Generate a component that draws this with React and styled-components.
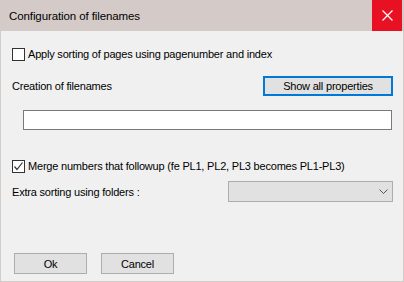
import React from 'react';
import styled, { createGlobalStyle } from 'styled-components';

const GlobalStyle = createGlobalStyle`
  html, body { margin: 0; padding: 0; background: #ffffff; }
  body {
    font-family: "Liberation Sans", Arial, sans-serif;
    font-size: 11px;
    letter-spacing: -0.2px;
    color: #000;
  }
`;

const Window = styled.div`
  width: 404px;
  height: 282px;
  box-sizing: border-box;
  background: #d4cac8;
  display: flex;
  flex-direction: column;
  padding: 0 1px 1px 1px;
`;

const TitleBar = styled.div`
  height: 31px;
  display: flex;
  align-items: center;
  justify-content: space-between;
  margin: 0 -1px;
`;

const Title = styled.span`
  padding-left: 9px;
  font-size: 11.5px;
  letter-spacing: -0.1px;
`;

const CloseButton = styled.div`
  width: 30px;
  height: 31px;
  margin-right: 2px;
  background: #e81123;
  display: flex;
  align-items: center;
  justify-content: center;
`;

const Body = styled.div`
  flex: 1;
  background: #f0f0f0;
  display: flex;
  flex-direction: column;
  padding: 0 10px 0 11px;
`;

const CheckRow = styled.label`
  display: flex;
  align-items: center;
  gap: 3px;
  height: 14px;
  margin-top: ${p => p.$top}px;
`;

const Box = styled.span`
  width: 13px;
  height: 13px;
  box-sizing: border-box;
  border: 1px solid #333333;
  background: #ffffff;
  display: flex;
  align-items: center;
  justify-content: center;
`;

const Row = styled.div`
  display: flex;
  align-items: center;
  justify-content: space-between;
  margin-top: ${p => p.$top}px;
`;

const Label = styled.span`
  line-height: 16px;
  white-space: nowrap;
`;

const Button = styled.div`
  box-sizing: border-box;
  width: ${p => p.$width}px;
  height: ${p => p.$height}px;
  background: #e1e1e1;
  border: ${p => (p.$focused ? '2px solid #0078d7' : '1px solid #adadad')};
  display: flex;
  align-items: center;
  justify-content: center;
`;

const TextField = styled.div`
  box-sizing: border-box;
  height: 20px;
  margin: 14px 1px 0 11px;
  background: #ffffff;
  border: 1px solid #7a7a7a;
`;

const Select = styled.div`
  box-sizing: border-box;
  width: 165px;
  height: 21px;
  background: #e1e1e1;
  border: 1px solid #adadad;
  display: flex;
  align-items: center;
  justify-content: flex-end;
  padding-right: 4px;
`;

const Footer = styled.div`
  display: flex;
  gap: 14px;
  margin-top: 51px;
  padding-left: 2px;
`;

const Check = () => (
  <svg width="11" height="11" viewBox="0 0 11 11">
    <polyline points="1.5,5.5 4,8.5 9.5,1.5" fill="none" stroke="#333" strokeWidth="1.2" />
  </svg>
);

const Chevron = () => (
  <svg width="9" height="5" viewBox="0 0 9 5">
    <polyline points="0.5,0.5 4.5,4.5 8.5,0.5" fill="none" stroke="#555" strokeWidth="1" />
  </svg>
);

const Cross = () => (
  <svg width="11" height="11" viewBox="0 0 11 11">
    <path d="M0.5 0.5 L10.5 10.5 M10.5 0.5 L0.5 10.5" stroke="#fff" strokeWidth="1.2" />
  </svg>
);

export default function App() {
  return (
    <>
      <GlobalStyle />
      <Window>
        <TitleBar>
          <Title>Configuration of filenames</Title>
          <CloseButton><Cross /></CloseButton>
        </TitleBar>
        <Body>
          <CheckRow $top={16}>
            <Box />
            <Label>Apply sorting of pages using pagenumber and index</Label>
          </CheckRow>
          <Row $top={15}>
            <Label>Creation of filenames</Label>
            <Button $width={130} $height={20} $focused>Show all properties</Button>
          </Row>
          <TextField />
          <CheckRow $top={29}>
            <Box><Check /></Box>
            <Label>Merge numbers that followup (fe PL1, PL2, PL3 becomes PL1-PL3)</Label>
          </CheckRow>
          <Row $top={8}>
            <Label>Extra sorting using folders :</Label>
            <Select><Chevron /></Select>
          </Row>
          <Footer>
            <Button $width={73} $height={21}>Ok</Button>
            <Button $width={73} $height={21}>Cancel</Button>
          </Footer>
        </Body>
      </Window>
    </>
  );
}
